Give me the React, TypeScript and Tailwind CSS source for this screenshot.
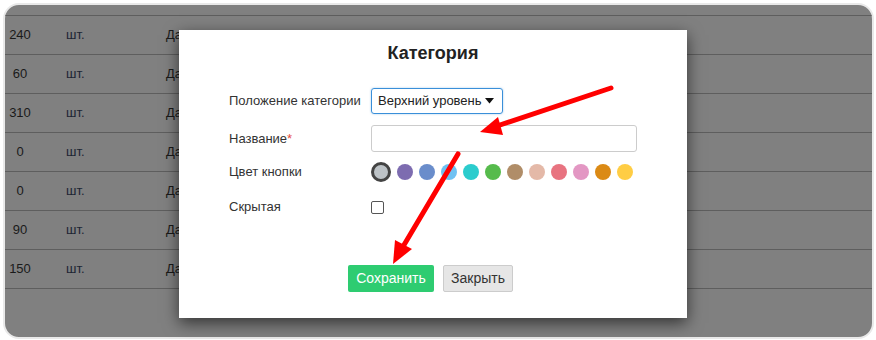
import React from 'react';

const rows = ['240', '60', '310', '0', '0', '90', '150'];

const swatches = [
  '#7d6cb0',
  '#6a8dcb',
  '#6fc1f2',
  '#2bcccd',
  '#56bb4c',
  '#b08d68',
  '#e4b9a8',
  '#e87380',
  '#e397c3',
  '#db8a15',
  '#ffcd44',
];

const Row = ({ qty }: { qty: string }) => (
  <div className="flex h-[39px] shrink-0 items-center border-b border-[#5e5e5e] text-[13px] text-[#1a1a1a]">
    <div className="w-[30px] text-center">{qty}</div>
    <div className="ml-[31px] w-[100px] text-[#1c2433]">шт.</div>
    <div>Да</div>
  </div>
);

export default function App() {
  return (
    <div
      className="relative h-[340px] w-[876px] overflow-hidden bg-white pl-[3px] pt-[3px]"
      style={{ fontFamily: '"Liberation Sans", Arial, sans-serif' }}
    >
      {/* dimmed page behind the dialog */}
      <div className="flex h-[336px] w-[871px] flex-col overflow-hidden rounded-[16px] border-2 border-[#e9e9e9] bg-[#808080]">
        <div className="-mt-[28px] flex flex-col">
          <Row qty="" />
          {rows.map((q, i) => (
            <Row key={i} qty={q} />
          ))}
        </div>
      </div>

      {/* dialog */}
      <div className="absolute left-[179px] top-[30px] flex h-[288px] w-[508px] flex-col bg-white shadow-[0_5px_15px_rgba(0,0,0,0.6)]">
        <div className="pt-[13px] text-center text-[18px] font-bold leading-[20px] text-[#222]">Категория</div>

        <div className="mt-[25px] flex flex-col pl-[50px] text-[13px] text-[#333]">
          <div className="flex h-[26px] items-center">
            <div className="w-[142px]">Положение категории</div>
            <div className="flex h-[26px] w-[132px] items-center justify-between whitespace-nowrap rounded-[3px] border border-[#3a8fd9] pl-[6px] pr-[8px] text-[13px] text-[#222] shadow-[0_0_2px_rgba(58,143,217,0.5)]">
              <span>Верхний уровень</span>
              <svg width="9" height="6" viewBox="0 0 9 6">
                <path d="M0 0 H9 L4.5 5.5 Z" fill="#111" />
              </svg>
            </div>
          </div>

          <div className="mt-[11px] flex h-[27px] items-center">
            <div className="w-[142px]">
              Название<span className="text-[#e74c3c]">*</span>
            </div>
            <div className="h-[27px] w-[266px] rounded-[3px] border border-[#ccc]" />
          </div>

          <div className="mt-[10px] flex h-[20px] items-center">
            <div className="w-[142px]">Цвет кнопки</div>
            <div className="flex items-center gap-[6px]">
              <div className="h-[20px] w-[20px] rounded-full border-[3px] border-[#444] bg-[#bdc3c7]" />
              {swatches.map((c) => (
                <div key={c} className="h-[16px] w-[16px] rounded-full" style={{ backgroundColor: c }} />
              ))}
            </div>
          </div>

          <div className="mt-[15px] flex h-[20px] items-center">
            <div className="w-[142px]">Скрытая</div>
            <div className="h-[13px] w-[13px] rounded-[2px] border border-[#555]" />
          </div>
        </div>

        <div className="mt-[48px] flex gap-[9px] pl-[169px] text-[14px]">
          <div className="flex h-[27px] w-[86px] items-center justify-center rounded-[2px] bg-[#2ecc71] text-white">
            Сохранить
          </div>
          <div className="flex h-[27px] w-[70px] items-center justify-center rounded-[2px] border border-[#ccc] bg-[#e6e6e6] text-[#333]">
            Закрыть
          </div>
        </div>
      </div>

      {/* red annotation arrows */}
      <svg className="pointer-events-none absolute left-0 top-0" width="876" height="340" viewBox="0 0 876 340">
        <line x1="611" y1="88" x2="494" y2="127" stroke="#ff0000" strokeWidth="5" strokeLinecap="round" />
        <polygon points="480,132 498,117 503,135" fill="#ff0000" />
        <line x1="458" y1="154" x2="401" y2="250" stroke="#ff0000" strokeWidth="5" strokeLinecap="round" />
        <polygon points="393,264 395,240 412,249" fill="#ff0000" />
      </svg>
    </div>
  );
}
